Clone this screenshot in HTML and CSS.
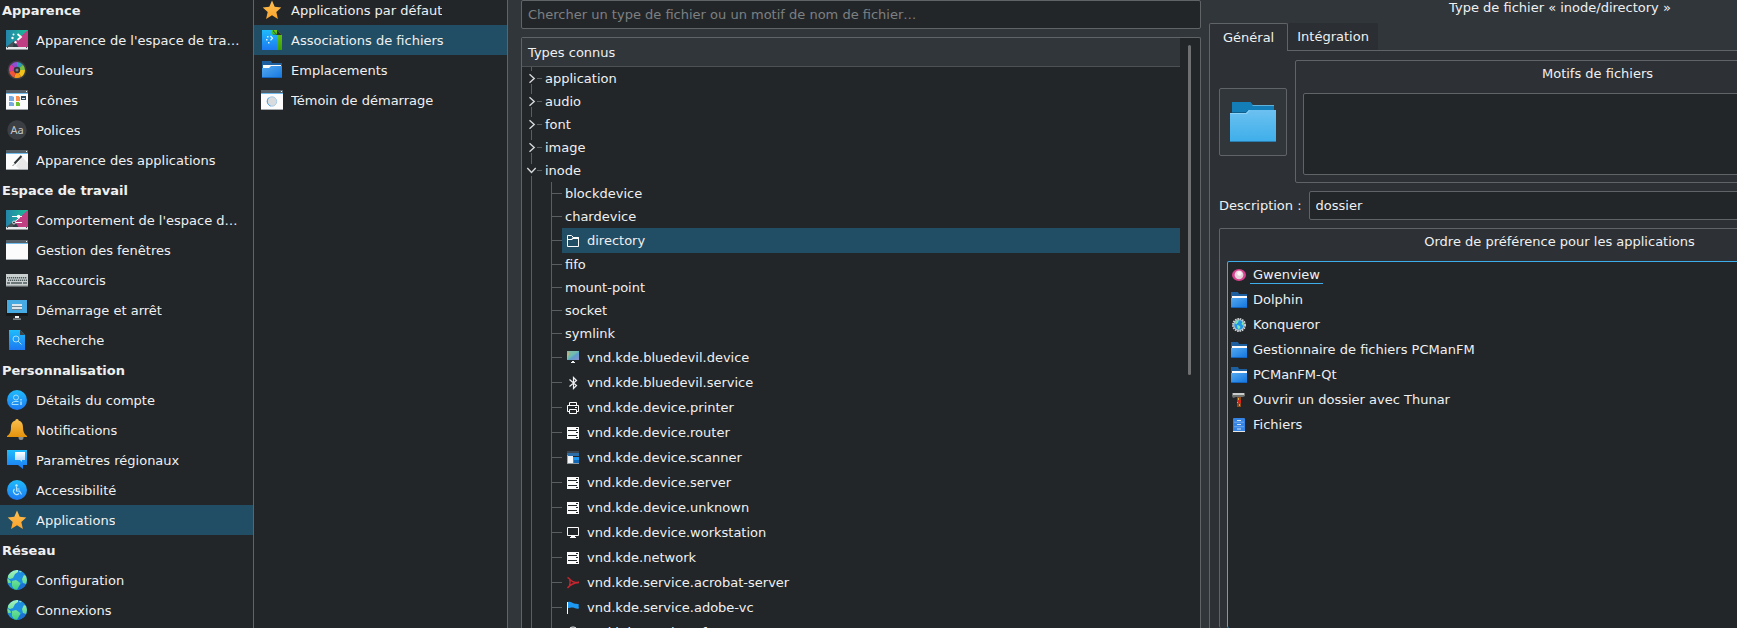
FILE: index.html
```html
<!DOCTYPE html>
<html lang="fr">
<head>
<meta charset="utf-8">
<title>Associations de fichiers</title>
<link rel="stylesheet" href="styles.css">
</head>
<body>
<svg class="sprite" aria-hidden="true">
  <defs>
    <linearGradient id="g-teal" x1="0" y1="0" x2="1" y2="0"><stop offset="0" stop-color="#2485aa"/><stop offset="1" stop-color="#1abc94"/></linearGradient>
    <linearGradient id="g-blue" x1="0" y1="0" x2="0" y2="1"><stop offset="0" stop-color="#1fbcfb"/><stop offset="1" stop-color="#1d79f2"/></linearGradient>
    <linearGradient id="g-sky" x1="0" y1="0" x2="0" y2="1"><stop offset="0" stop-color="#6cc1f0"/><stop offset="1" stop-color="#3daeea"/></linearGradient>
    <linearGradient id="g-folder" x1="0" y1="0" x2="1" y2="1"><stop offset="0" stop-color="#55a9ee"/><stop offset="1" stop-color="#1477e0"/></linearGradient>
    <linearGradient id="g-bell" x1="0" y1="0" x2="0" y2="1"><stop offset="0" stop-color="#fbc050"/><stop offset="1" stop-color="#e5920b"/></linearGradient>
    <linearGradient id="g-star" x1="0" y1="0" x2="0" y2="1"><stop offset="0" stop-color="#fcc055"/><stop offset="1" stop-color="#fca329"/></linearGradient>
    <linearGradient id="g-land" x1="0" y1="0" x2="0" y2="1"><stop offset="0" stop-color="#a6f3bf"/><stop offset="1" stop-color="#3fcf7c"/></linearGradient>
    <linearGradient id="g-green" x1="0" y1="0" x2="0" y2="1"><stop offset="0" stop-color="#6cc911"/><stop offset="1" stop-color="#3b9e05"/></linearGradient>
    <linearGradient id="g-screen" x1="0" y1="0" x2="1" y2="1"><stop offset="0" stop-color="#8fb3a0"/><stop offset=".45" stop-color="#6fbcae"/><stop offset=".6" stop-color="#5f9ccb"/><stop offset="1" stop-color="#8a8fcb"/></linearGradient>
    <linearGradient id="g-chat" x1="0" y1="0" x2="0" y2="1"><stop offset="0" stop-color="#fff"/><stop offset="1" stop-color="#a9d3f8"/></linearGradient>

    <symbol id="i-themebase" viewBox="0 0 22 22">
      <path fill="url(#g-teal)" d="M0 1h22v17H0z"/>
      <path fill="#c03f83" d="M22 1v17H11L7.5 14z"/>
      <path fill="#4a5257" d="M0 18l8-6 4 6z"/>
      <path fill="#2c3e46" d="M8 12l4.500 6H7z"/>
      <path fill="#e7ebec" d="M0 18h22v2H0z"/>
      <path fill="#8d9294" d="M0 20h22v1H0z"/>
      <path fill="#4b5357" d="M1 18h1v1H1zM20 18h1v1h-1z"/>
    </symbol>
    <symbol id="i-theme" viewBox="0 0 22 22">
      <use href="#i-themebase"/>
      <path fill="none" stroke="#fff" stroke-width="1.800" d="M11.500 5l3.500 3-3.500 3"/>
      <circle cx="7.500" cy="5.500" r="1" fill="#fff"/><circle cx="6.500" cy="9" r="1.200" fill="#fff"/><circle cx="9.500" cy="13.200" r="1.200" fill="#fff"/>
    </symbol>
    <symbol id="i-behavior" viewBox="0 0 22 22">
      <use href="#i-themebase"/>
      <path fill="none" stroke="#fff" d="M6 7.500h10M7 13.500h9M9 12.500l5-4"/>
      <circle cx="12.500" cy="7.500" r="1.800" fill="#fff"/><circle cx="8" cy="13.500" r="1.500" fill="#2c3e46" stroke="#fff" stroke-width=".8"/>
    </symbol>
    <symbol id="i-colors" viewBox="0 0 22 22">
      <circle cx="11" cy="11" r="9.500" fill="#393d41"/>
      <path fill="#f2c21b" d="M11 11l8 0A8 8 0 0 1 15 18z"/>
      <path fill="#f59a1c" d="M11 11l4 7A8 8 0 0 1 8 18.400z"/>
      <path fill="#f2553a" d="M11 11L8 18.400A8 8 0 0 1 3.200 12.500z"/>
      <path fill="#d8399f" d="M11 11L3.200 12.500A8 8 0 0 1 5.500 5.200z"/>
      <path fill="#8f4fd4" d="M11 11L5.500 5.200A8 8 0 0 1 11 3z"/>
      <path fill="#2f9bb0" d="M11 11V3a8 8 0 0 1 6 2.800z"/>
      <path fill="#7bc043" d="M11 11l6-5.200A8 8 0 0 1 19 11z"/>
      <circle cx="11" cy="11" r="3.200" fill="#31363b"/><circle cx="11" cy="11" r="1.500" fill="#7d7f88"/>
    </symbol>
    <symbol id="i-window" viewBox="0 0 22 22">
      <path fill="#566069" d="M0 1h22v3H0z"/><path fill="#eff0f1" d="M20 2h1v1h-1z"/>
      <path fill="#73bdec" d="M0 4h22v1H0z"/><path fill="#fcfcfc" d="M0 5h22v15H0z"/><path fill="#a4a9ad" d="M0 20h22v1H0z"/>
    </symbol>
    <symbol id="i-icons" viewBox="0 0 22 22">
      <use href="#i-window"/>
      <path fill="#78aae0" d="M3 7h3l2 1v4H3zM3 13h3l2 1v3H3z"/><path fill="#fc8f4e" d="M10 7h3v1h1v4h-4z"/><path fill="#6bc12f" d="M10 13h3v1h1v3h-4z"/><path fill="#2e4858" d="M15 7h5v4h-5z"/><path fill="#cfe4f2" d="M16 9h3v1h-3z"/>
    </symbol>
    <symbol id="i-fonts" viewBox="0 0 22 22">
      <circle cx="11" cy="11" r="9.700" fill="#3b3f43"/>
      <text x="11" y="15" text-anchor="middle" font-family="Noto Sans, sans-serif" font-size="11" fill="#c3c6c8">Aa</text>
    </symbol>
    <symbol id="i-style" viewBox="0 0 22 22">
      <use href="#i-window"/><path fill="#e8e8e9" d="M10 17l6-9 6 6v6h-9z"/>
      <path fill="none" stroke="#2f3437" stroke-width="2" d="M8.500 14.500l7-7.500"/><path stroke="#7b7f82" stroke-width="1" fill="none" d="M6.500 17l2-2"/>
    </symbol>
    <symbol id="i-keyboard" viewBox="0 0 22 22">
      <path fill="#c9cfcf" d="M0 5h22v12H0z"/><path fill="#a0a8a8" d="M0 16h22v1.500H0z"/>
      <path stroke="#4c5a5c" stroke-width="1.500" stroke-dasharray="1.300 .7" fill="none" d="M1 8.800h20M2 11.300h19"/>
      <path stroke="#4c5a5c" stroke-width="1.500" fill="none" d="M1 14h3M5 14h11M17 14h4"/>
    </symbol>
    <symbol id="i-boot" viewBox="0 0 22 22">
      <path fill="#17191b" d="M0 1h22v16H0z"/><path fill="#46abe2" d="M1 1h20v13H1z"/>
      <path fill="#dbe5ec" d="M6 5h10v2H6zM6 8h10v2H6z"/><path fill="#6c8496" d="M6 7h10v1H6zM6 10h10v1H6z"/>
      <path fill="#eff0f1" d="M9 17h4v2H9z"/><path fill="#9da2a5" d="M7 19.500h8v1.200H7z"/>
    </symbol>
    <symbol id="i-search" viewBox="0 0 22 22">
      <path fill="url(#g-blue)" d="M3 1h11l5 5v15H3z"/><path fill="#3d4145" d="M14 1l5 5h-5z"/>
      <circle cx="10" cy="10" r="3" fill="none" stroke="#a4def9"/><path stroke="#a4def9" d="M12 12l3.500 3.500"/>
    </symbol>
    <symbol id="i-user" viewBox="0 0 22 22">
      <circle cx="11" cy="11" r="10" fill="url(#g-blue)"/>
      <g fill="none" stroke="#a4def9"><circle cx="10" cy="8.500" r="2.500"/><path d="M12.500 15.500H6v-1q0-2 3-2h3.500"/><path d="M15 10v1.500M15 12.500V16" stroke-width="1.500"/></g>
    </symbol>
    <symbol id="i-bell" viewBox="0 0 22 22">
      <circle cx="15" cy="18.500" r="2.500" fill="#8a8d8f"/>
      <path fill="url(#g-bell)" d="M11 0c1.200 0 1.600.8 1.600 1.600C16 2.400 17 5.500 17 8.500c0 4 1 6.500 4 8.500v1H1v-1c3-2 4-4.500 4-8.500 0-3 1-6.100 4.400-6.900C9.400.8 9.800 0 11 0z"/>
    </symbol>
    <symbol id="i-locale" viewBox="0 0 22 22">
      <path fill="url(#g-blue)" d="M1 1h20v15h-4v4l-5-4H1z"/><path fill="url(#g-chat)" d="M9 3h10v8h-3v2l-2-2H9z"/>
    </symbol>
    <symbol id="i-access" viewBox="0 0 22 22">
      <circle cx="11" cy="11" r="10" fill="url(#g-blue)"/>
      <circle cx="10.500" cy="6.500" r="1.200" fill="#c4ebfc"/><path fill="none" stroke="#b4e4fb" stroke-width="1.100" d="M10.500 8v4h3l2 3.500M8.500 10a3 3 0 1 0 4.500 4.500M10.500 10h3"/>
    </symbol>
    <symbol id="i-star" viewBox="0 0 22 22">
      <path fill="url(#g-star)" d="M11 1.500l2.700 6.200 6.600.7-5 4.500 1.600 7L11 16.300l-5.900 3.600 1.600-7-5-4.500 6.600-.7z"/>
    </symbol>
    <symbol id="i-globe" viewBox="0 0 22 22">
      <circle cx="11" cy="11" r="10" fill="#1e8ee0"/><path fill="#1b72d4" d="M11 21a10 10 0 0 0 10-10l-7 5z"/>
      <path fill="url(#g-land)" d="M2 7C4 3 8 1 12 1v2l-3 2-2 4-3 1-2-1zM1.500 9.500l3 2.500.500 2-3 0zM6 12l4-1 3 2 1.500 1.500-3.500 6H8.500L6 17zM16 10l2-4 2 1 1 4-1 4-3-1zM13 2l3 .5-2 1z"/>
    </symbol>
    <symbol id="i-assoc" viewBox="0 0 22 22">
      <path fill="url(#g-green)" d="M11 1h5l5 5v15H11z"/><path fill="url(#g-blue)" d="M1 1h10l5 5v15H1z"/>
      <path fill="#2b2f33" d="M16 1l5 5h-5zM12 1l4 4.500V6l-4-.5z"/><path fill="#3cbd38" d="M11 5.500V1l4.500 4.500z"/>
      <path fill="none" stroke="#d4effd" stroke-width="1.300" d="M9.500 7l2 2.200-2 2.200"/><path fill="#d4effd" d="M6 7h1.500v1.500H6zM5 10h1.500v1.500H5zM7 13h1.500v1.500H7z"/>
    </symbol>
    <symbol id="i-folder" viewBox="0 0 22 22">
      <path fill="#1d5f9f" d="M1 2h9l1 2h10v14H1z"/><path fill="#fcfcfc" d="M2 6h18v4H2z"/>
      <path fill="url(#g-folder)" d="M1 9h7l2-2h11v12H1z"/><path fill="#1464bf" d="M1 18h20v1H1z"/>
    </symbol>
    <symbol id="i-splash" viewBox="0 0 22 22">
      <use href="#i-window"/><circle cx="11" cy="12.500" r="4.700" fill="#d9dcde" stroke="#a9cbe6"/><path fill="none" stroke="#3f9fe0" d="M8 8.500a5 5 0 0 0 1.500 8.500"/>
    </symbol>
    <symbol id="i-expander" viewBox="0 0 20 23">
      <path stroke="#5a5e61" d="M9.500 0v4M9.500 17v6M15 11.500h5"/><path fill="none" stroke="#d6d8d9" stroke-width="1.400" d="M7.500 7.300l4.700 4.200-4.700 4.200"/>
    </symbol>
    <symbol id="i-collapser" viewBox="0 0 20 23">
      <path stroke="#5a5e61" d="M9.500 0v5M9.500 17v6M15 11.500h5"/><path fill="none" stroke="#d6d8d9" stroke-width="1.400" d="M5.300 9l4.200 4.500 4.200-4.500"/>
    </symbol>
    <symbol id="i-dir" viewBox="0 0 16 16">
      <path fill="none" stroke="#fcfcfc" d="M2.500 13.500v-11h4l2 2h5v9z"/><path fill="#fcfcfc" d="M8 4h6v2H8L7 7H2V6h4.500z"/>
    </symbol>
    <symbol id="i-btdevice" viewBox="0 0 16 16">
      <path fill="url(#g-screen)" d="M2 1h12v9H2z"/><path fill="#e3b66e" fill-opacity=".6" d="M2 10l3-9-3 3z"/><path fill="#eff0f1" d="M7 11h2v1h1v1H6v-1h1z"/>
    </symbol>
    <symbol id="i-bluetooth" viewBox="0 0 16 16">
      <path fill="none" stroke="#eff0f1" stroke-width="1.200" d="M4.500 4.500l7 6L8.500 13.500v-11l3 3-7 6"/>
    </symbol>
    <symbol id="i-printer" viewBox="0 0 16 16">
      <path fill="none" stroke="#fcfcfc" d="M4.500 5V2.500h7V5M4 11.500H2.500v-6h11v6H12M4.500 9.500h7v4h-7z"/><path fill="#fcfcfc" d="M10 7h2v1h-2z"/>
    </symbol>
    <symbol id="i-server" viewBox="0 0 16 16">
      <path fill="#fcfcfc" d="M2 2h12v12H2z"/><path fill="#232629" d="M11 3h2v1h-2zM11 7h2v1h-2zM11 12h2v1h-2zM3 5h9v1H3zM3 10h9v1H3z"/>
    </symbol>
    <symbol id="i-scanner" viewBox="0 0 16 16">
      <path fill="#39444f" d="M2 1h12v4H2z"/><path fill="#2c6da8" d="M2 3h12v3H2z"/><path fill="#1d99f3" d="M8 7h6v6H8z"/><path fill="#1267b4" d="M9 10h5v3H9z"/><path fill="#8fa9bd" d="M2 5h1v8H2z"/><path fill="#f4f6f7" d="M3 6h5v7H3z"/><path fill="#8d979e" d="M2 13h12v1H2z"/>
    </symbol>
    <symbol id="i-workstation" viewBox="0 0 16 16">
      <path fill="none" stroke="#fcfcfc" d="M2.500 2.500h11v8h-11zM5 12.500h6"/><path fill="#fcfcfc" d="M6 11h4v1H6z"/>
    </symbol>
    <symbol id="i-acrobat" viewBox="0 0 16 16">
      <path fill="none" stroke="#c6262e" stroke-width="1.400" d="M2.500 2.500C4.500 3 5.500 6 8.500 7c2 .7 3.500.3 5.500 0M4.500 3.500c1 2.500 1 4.500 0 8M14 7.500C9 8 5.500 9 2.500 13"/>
    </symbol>
    <symbol id="i-flag" viewBox="0 0 16 16">
      <path fill="#1d99f3" d="M3 2c3-1 4 1 6 1.500 2 .5 2.500 0 5 1-1 2 0 2.500 0 4-3 .5-4-.5-6-1-2-.300-3 .500-5 .500z"/><path fill="#fcfcfc" d="M2 2h1v12H2z"/>
    </symbol>
    <symbol id="i-service" viewBox="0 0 16 16">
      <circle cx="8" cy="7" r="5" fill="none" stroke="#fcfcfc"/>
    </symbol>
    <symbol id="i-gwenview" viewBox="0 0 16 16">
      <ellipse cx="8" cy="8" rx="7" ry="6" fill="#d8418f"/><circle cx="8" cy="7.800" r="4.400" fill="#e5d3da"/><circle cx="8.500" cy="6.500" r="2.200" fill="#fcf6f8"/>
    </symbol>
    <symbol id="i-smallfolder" viewBox="0 0 16 16">
      <path fill="#1d5f9f" d="M0 0h7l1 2h8v5H0z"/><path fill="#fcfcfc" d="M1 4h15v3H1z"/><path fill="url(#g-folder)" d="M0 6h16v9H0z"/><path fill="#1464bf" d="M0 15h16v1H0z"/>
    </symbol>
    <symbol id="i-konqueror" viewBox="0 0 16 16">
      <circle cx="8" cy="8" r="6" fill="none" stroke="#cdd2d4" stroke-width="2" stroke-dasharray="1.600 .756"/><circle cx="8" cy="8" r="5.700" fill="#b9c2c6"/><circle cx="8" cy="8" r="4.700" fill="#2196e8"/>
      <path fill="#7fe8ae" d="M4 6l2-2.500 2-.500-1 2.500-2 2zM6 8l2 .5 1.500 1.500L8 12.500 6.500 11zM10.500 7l1-2.500L12.500 7v2z"/>
    </symbol>
    <symbol id="i-thunar" viewBox="0 0 16 16">
      <path fill="#6e7370" d="M1 1h13v3l-2 1H5L2 6 1 4z"/><path fill="#c9ccca" d="M2 1h11v2H2z"/><path fill="#8e4a1a" d="M6 5h4v10H6z"/><path fill="#d3261c" d="M7 8h3v3H7z"/><path fill="#e8a532" d="M7 6h1v2H7zM8 12h1v2H8zM6 10h1v1H6z"/>
    </symbol>
    <symbol id="i-files" viewBox="0 0 16 16">
      <rect x="2" y="1" width="12" height="14" rx="1" fill="#3584e4"/><path fill="#e6e6e4" d="M2 14h12v1H2z"/><path stroke="#99c1f1" stroke-width=".6" d="M3 5.200h10M3 9.700h10"/><path stroke="#d5e6fa" fill="none" d="M6 3.500h4M6 7.500h4M6 12h4"/>
    </symbol>
    <symbol id="i-bigfolder" viewBox="0 0 48 48">
      <path fill="#147eb8" d="M3 4h18.500l2.500 3h21v13H3z"/><path fill="#5fb1da" d="M23 7h22v1H24z"/><path fill="#0f5f8c" d="M3 14h14l2-2v3l-2 2H3z"/>
      <path fill="url(#g-sky)" d="M1 15h16l3-3h27v32H1z"/><path fill="#8dd2f8" d="M1 15h16l3-3h1l-3 4H1z"/><path fill="#2a7fb0" d="M1 43h46v1H1z"/>
    </symbol>
  </defs>
</svg>

<div class="app">
  <nav class="sidebar" aria-label="Catégories">
    <h2 class="nav-heading">Apparence</h2>
    <a class="nav-link" href="#"><svg class="icon"><use href="#i-theme"/></svg><span class="label">Apparence de l'espace de travail</span></a>
    <a class="nav-link" href="#"><svg class="icon"><use href="#i-colors"/></svg><span class="label">Couleurs</span></a>
    <a class="nav-link" href="#"><svg class="icon"><use href="#i-icons"/></svg><span class="label">Icônes</span></a>
    <a class="nav-link" href="#"><svg class="icon"><use href="#i-fonts"/></svg><span class="label">Polices</span></a>
    <a class="nav-link" href="#"><svg class="icon"><use href="#i-style"/></svg><span class="label">Apparence des applications</span></a>
    <h2 class="nav-heading">Espace de travail</h2>
    <a class="nav-link" href="#"><svg class="icon"><use href="#i-behavior"/></svg><span class="label">Comportement de l'espace de travail</span></a>
    <a class="nav-link" href="#"><svg class="icon"><use href="#i-window"/></svg><span class="label">Gestion des fenêtres</span></a>
    <a class="nav-link" href="#"><svg class="icon"><use href="#i-keyboard"/></svg><span class="label">Raccourcis</span></a>
    <a class="nav-link" href="#"><svg class="icon"><use href="#i-boot"/></svg><span class="label">Démarrage et arrêt</span></a>
    <a class="nav-link" href="#"><svg class="icon"><use href="#i-search"/></svg><span class="label">Recherche</span></a>
    <h2 class="nav-heading">Personnalisation</h2>
    <a class="nav-link" href="#"><svg class="icon"><use href="#i-user"/></svg><span class="label">Détails du compte</span></a>
    <a class="nav-link" href="#"><svg class="icon"><use href="#i-bell"/></svg><span class="label">Notifications</span></a>
    <a class="nav-link" href="#"><svg class="icon"><use href="#i-locale"/></svg><span class="label">Paramètres régionaux</span></a>
    <a class="nav-link" href="#"><svg class="icon"><use href="#i-access"/></svg><span class="label">Accessibilité</span></a>
    <a class="nav-link selected" href="#" aria-current="page"><svg class="icon"><use href="#i-star"/></svg><span class="label">Applications</span></a>
    <h2 class="nav-heading">Réseau</h2>
    <a class="nav-link" href="#"><svg class="icon"><use href="#i-globe"/></svg><span class="label">Configuration</span></a>
    <a class="nav-link" href="#"><svg class="icon"><use href="#i-globe"/></svg><span class="label">Connexions</span></a>
  </nav>

  <nav class="sidebar subnav" aria-label="Applications">
    <a class="nav-link" href="#"><svg class="icon"><use href="#i-star"/></svg><span class="label">Applications par défaut</span></a>
    <a class="nav-link selected" href="#" aria-current="page"><svg class="icon"><use href="#i-assoc"/></svg><span class="label">Associations de fichiers</span></a>
    <a class="nav-link" href="#"><svg class="icon"><use href="#i-folder"/></svg><span class="label">Emplacements</span></a>
    <a class="nav-link" href="#"><svg class="icon"><use href="#i-splash"/></svg><span class="label">Témoin de démarrage</span></a>
  </nav>

  <main class="content">
    <section class="types">
      <input class="field" type="text" aria-label="Chercher un type de fichier" placeholder="Chercher un type de fichier ou un motif de nom de fichier…">
      <div class="type-list">
        <div class="type-main">
          <div class="list-header">Types connus</div>
          <ul class="tree" role="tree">
            <li class="row" role="treeitem"><svg class="branch"><use href="#i-expander"/></svg>application</li>
            <li class="row" role="treeitem"><svg class="branch"><use href="#i-expander"/></svg>audio</li>
            <li class="row" role="treeitem"><svg class="branch"><use href="#i-expander"/></svg>font</li>
            <li class="row" role="treeitem"><svg class="branch"><use href="#i-expander"/></svg>image</li>
            <li role="treeitem" aria-expanded="true">
              <div class="row"><svg class="branch"><use href="#i-collapser"/></svg>inode</div>
              <ul class="children" role="group">
                <li class="leaf"><span class="name">blockdevice</span></li>
                <li class="leaf"><span class="name">chardevice</span></li>
                <li class="leaf iconed"><span class="name selected"><svg class="mini"><use href="#i-dir"/></svg>directory</span></li>
                <li class="leaf"><span class="name">fifo</span></li>
                <li class="leaf"><span class="name">mount-point</span></li>
                <li class="leaf"><span class="name">socket</span></li>
                <li class="leaf"><span class="name">symlink</span></li>
                <li class="leaf iconed"><span class="name"><svg class="mini"><use href="#i-btdevice"/></svg>vnd.kde.bluedevil.device</span></li>
                <li class="leaf iconed"><span class="name"><svg class="mini"><use href="#i-bluetooth"/></svg>vnd.kde.bluedevil.service</span></li>
                <li class="leaf iconed"><span class="name"><svg class="mini"><use href="#i-printer"/></svg>vnd.kde.device.printer</span></li>
                <li class="leaf iconed"><span class="name"><svg class="mini"><use href="#i-server"/></svg>vnd.kde.device.router</span></li>
                <li class="leaf iconed"><span class="name"><svg class="mini"><use href="#i-scanner"/></svg>vnd.kde.device.scanner</span></li>
                <li class="leaf iconed"><span class="name"><svg class="mini"><use href="#i-server"/></svg>vnd.kde.device.server</span></li>
                <li class="leaf iconed"><span class="name"><svg class="mini"><use href="#i-server"/></svg>vnd.kde.device.unknown</span></li>
                <li class="leaf iconed"><span class="name"><svg class="mini"><use href="#i-workstation"/></svg>vnd.kde.device.workstation</span></li>
                <li class="leaf iconed"><span class="name"><svg class="mini"><use href="#i-server"/></svg>vnd.kde.network</span></li>
                <li class="leaf iconed"><span class="name"><svg class="mini"><use href="#i-acrobat"/></svg>vnd.kde.service.acrobat-server</span></li>
                <li class="leaf iconed"><span class="name"><svg class="mini"><use href="#i-flag"/></svg>vnd.kde.service.adobe-vc</span></li>
                <li class="leaf iconed"><span class="name"><svg class="mini"><use href="#i-service"/></svg>vnd.kde.service.afpovertcp</span></li>
              </ul>
            </li>
          </ul>
        </div>
        <div class="scrollbar"><div class="thumb"></div></div>
      </div>
    </section>

    <section class="details">
      <h1 class="title">Type de fichier « inode/directory »</h1>
      <div class="tabs" role="tablist">
        <button class="tab active" role="tab" aria-selected="true">Général</button>
        <button class="tab" role="tab" aria-selected="false">Intégration</button>
        <span class="tab-rest"></span>
      </div>
      <div class="pane" role="tabpanel">
        <div class="top">
          <button class="icon-button" aria-label="Choisir une icône"><svg class="big"><use href="#i-bigfolder"/></svg></button>
          <section class="group patterns">
            <h2 class="group-title">Motifs de fichiers</h2>
            <div class="list-box"></div>
          </section>
        </div>
        <div class="description">
          <label for="desc">Description :</label>
          <input class="field" id="desc" type="text" value="dossier">
        </div>
        <section class="group order">
          <h2 class="group-title">Ordre de préférence pour les applications</h2>
          <ul class="list-box apps" role="listbox" aria-label="Applications">
            <li class="app-item current" role="option"><svg class="mini"><use href="#i-gwenview"/></svg><span class="app-name">Gwenview</span></li>
            <li class="app-item" role="option"><svg class="mini"><use href="#i-smallfolder"/></svg><span class="app-name">Dolphin</span></li>
            <li class="app-item" role="option"><svg class="mini"><use href="#i-konqueror"/></svg><span class="app-name">Konqueror</span></li>
            <li class="app-item" role="option"><svg class="mini"><use href="#i-smallfolder"/></svg><span class="app-name">Gestionnaire de fichiers PCManFM</span></li>
            <li class="app-item" role="option"><svg class="mini"><use href="#i-smallfolder"/></svg><span class="app-name">PCManFM-Qt</span></li>
            <li class="app-item" role="option"><svg class="mini"><use href="#i-thunar"/></svg><span class="app-name">Ouvrir un dossier avec Thunar</span></li>
            <li class="app-item" role="option"><svg class="mini"><use href="#i-files"/></svg><span class="app-name">Fichiers</span></li>
          </ul>
        </section>
      </div>
    </section>
  </main>
</div>
</body>
</html>
```

FILE: styles.css
```css
:root {
  --view: #232629;
  --window: #31363b;
  --pane: #2d3035;
  --line: #616467;
  --text: #eff0f1;
  --selection: #224e65;
  --accent: #3daee9;
}

* { box-sizing: border-box; }

body {
  margin: 0;
  height: 100vh;
  overflow: hidden;
  background: var(--window);
  color: var(--text);
  font: 13px/16px "DejaVu Sans", sans-serif;
}

h1, h2, ul { margin: 0; padding: 0; font-size: 13px; font-weight: normal; list-style: none; }
button, input { font: inherit; color: inherit; }

.sprite { position: absolute; width: 0; height: 0; }

/* The window runs past the right edge of the viewport. */
.app {
  display: grid;
  grid-template-columns: 254px 254px minmax(0, 1fr);
  width: calc(100% + 182px);
  height: 100vh;
  overflow: hidden;
}

/* Navigation columns */
.sidebar {
  display: flex;
  flex-direction: column;
  margin-top: -5px;
  background: var(--view);
  border-right: 1px solid var(--line);
}
.nav-heading {
  flex: none;
  height: 30px;
  padding-left: 2px;
  line-height: 32px;
  font-weight: bold;
}
.nav-link {
  display: flex;
  flex: none;
  align-items: center;
  gap: 8px;
  height: 30px;
  padding: 0 12px 0 6px;
  color: inherit;
  text-decoration: none;
}
.subnav .nav-link { padding-left: 7px; }
.selected { background: var(--selection); }
.icon { flex: none; width: 22px; height: 22px; }
.label { overflow: hidden; padding-top: 2px; white-space: nowrap; text-overflow: ellipsis; }

/* Content */
.content {
  display: grid;
  grid-template-columns: minmax(0, 680fr) minmax(0, 702fr);
  gap: 8px;
  min-height: 0;
  padding: 0 8px 0 13px;
}
.field {
  width: 100%;
  height: 29px;
  padding: 0 6px;
  background: var(--view);
  border: 1px solid var(--line);
  border-radius: 2px;
  outline: none;
}
.field::placeholder { color: #7d8082; opacity: 1; }

.types { display: flex; flex-direction: column; gap: 8px; min-height: 0; }
.types > .field { flex: none; }
.type-list {
  display: flex;
  flex: 1;
  min-height: 0;
  overflow: hidden;
  background: var(--view);
  border: 1px solid var(--line);
  border-bottom: 0;
  border-radius: 2px 2px 0 0;
}
.type-main { flex: 1; min-width: 0; }
.list-header {
  height: 29px;
  padding-left: 6px;
  line-height: 30px;
  background: var(--window);
  border-bottom: 1px solid #4d5154;
}
.scrollbar { flex: none; width: 20px; padding: 7px 8px 0; }
.thumb { width: 3px; height: 330px; background: #6e7072; border-radius: 2px; }

/* Type tree */
.row { display: flex; align-items: center; gap: 3px; height: 23px; }
.branch { flex: none; width: 20px; height: 23px; }
.children {
  background:
    linear-gradient(#5a5e61, #5a5e61) 9px 0 / 1px 100% no-repeat,
    linear-gradient(#5a5e61, #5a5e61) 29px 0 / 1px 100% no-repeat;
}
.leaf {
  height: 23px;
  padding-left: 40px;
  background: linear-gradient(#5a5e61, #5a5e61) 29px 11px / 11px 1px no-repeat;
}
.leaf.iconed { height: 25px; background-position: 29px 12px; }
.name { display: flex; align-items: center; gap: 6px; height: 100%; padding-left: 3px; }
.mini { flex: none; width: 16px; height: 16px; }

/* Details */
.details { display: flex; flex-direction: column; min-height: 0; }
.title { flex: none; height: 23px; line-height: 16px; text-align: center; }
.tabs { display: flex; flex: none; height: 28px; }
.tab {
  padding: 0 9px;
  background: #2b2f33;
  border: 0;
  border-bottom: 1px solid var(--line);
  border-radius: 2px 2px 0 0;
}
.tab.active { padding: 0 13px; background: var(--pane); border: 1px solid var(--line); border-bottom: 0; }
.tab-rest { flex: 1; border-bottom: 1px solid var(--line); }
.pane {
  display: flex;
  flex: 1;
  flex-direction: column;
  gap: 8px;
  min-height: 0;
  padding: 9px 10px 0 9px;
  background: var(--pane);
  border: solid var(--line);
  border-width: 0 1px;
}
.top { display: flex; align-items: center; gap: 8px; }
.icon-button {
  display: grid;
  flex: none;
  place-items: center;
  width: 68px;
  height: 68px;
  padding: 0;
  background: var(--window);
  border: 1px solid var(--line);
  border-radius: 2px;
}
.big { width: 48px; height: 48px; }
.group { padding: 0 7px 7px; border: 1px solid var(--line); border-radius: 2px; }
.group-title { height: 32px; line-height: 26px; text-align: center; }
.patterns { flex: 1; }
.list-box { height: 82px; background: var(--view); border: 1px solid var(--line); border-radius: 2px; }
.description { display: flex; align-items: center; gap: 7px; white-space: nowrap; }
.order { display: flex; flex: 1; flex-direction: column; min-height: 0; padding-bottom: 0; border-bottom: 0; }
.order .group-title { flex: none; }
.apps {
  flex: 1;
  min-height: 0;
  overflow: hidden;
  border-color: var(--accent);
  border-bottom: 0;
}
.app-item { display: flex; align-items: center; gap: 3px; height: 25px; padding-left: 3px; }
.app-name { padding: 0 3px; line-height: 17px; border-bottom: 1px solid transparent; }
.current .app-name { border-color: var(--accent); }
```
